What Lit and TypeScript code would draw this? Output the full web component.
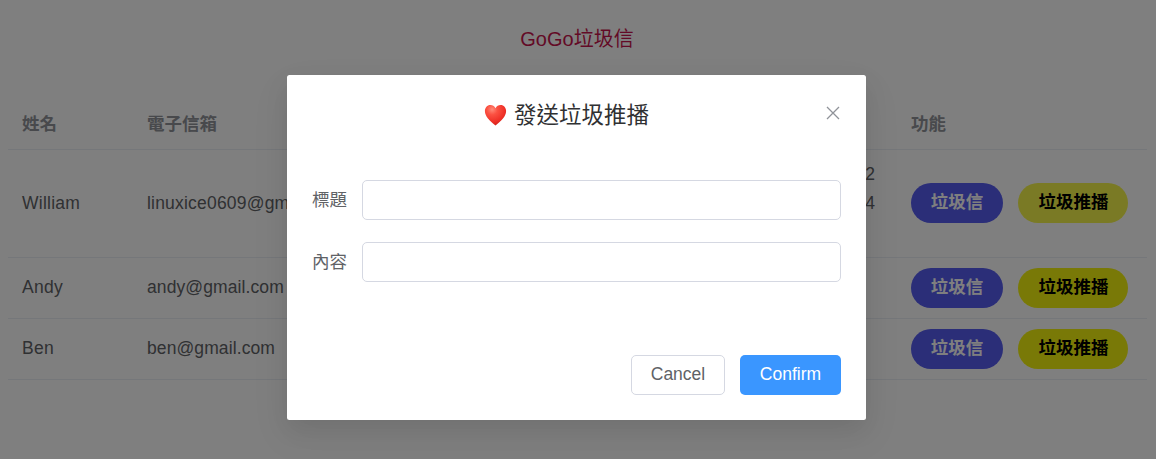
import { LitElement, html, css, svg } from "lit";
import { customElement } from "lit/decorators.js";

interface Member {
  name: string;
  email: string;
  token: string[];
  active?: boolean;
}

const MEMBERS: Member[] = [
  { name: "William", email: "linuxice0609@gmail.com", token: ["2", "4", ""], active: true },
  { name: "Andy", email: "andy@gmail.com", token: [] },
  { name: "Ben", email: "ben@gmail.com", token: [] },
];

const base = css`
  * {
    box-sizing: border-box;
  }
  button {
    font: inherit;
    height: 40px;
    padding: 0;
    display: inline-flex;
    align-items: center;
    justify-content: center;
    border: 1px solid transparent;
  }
`;

@customElement("member-table")
export class MemberTable extends LitElement {
  static styles = [
    base,
    css`
      :host {
        display: block;
        font-size: 17.5px;
        line-height: 28.75px;
        color: #606266;
      }
      .row {
        display: grid;
        grid-template-columns: 125px 220px 544px 1fr;
        align-items: center;
        border-bottom: 1px solid #ebeef5;
        padding: 10px 0 10px 14px;
        min-height: 61px;
        white-space: nowrap;
      }
      .tall {
        height: 108px;
        padding-bottom: 11px;
      }
      .head {
        height: 50px;
        min-height: 0;
        font-weight: 700;
        color: #909399;
      }
      .text {
        letter-spacing: 0.25px;
        padding-bottom: 1px;
      }
      .mail {
        letter-spacing: 0.1px;
        overflow: hidden;
      }
      .tall .mail {
        width: 145px;
        letter-spacing: 0.2px;
      }
      .tall .text {
        padding-bottom: 0;
      }
      .token {
        padding-right: 36px;
        text-align: right;
      }
      .line {
        height: 28.75px;
      }
      .actions {
        display: flex;
        gap: 15px;
      }
      .pill {
        border-radius: 20px;
        font-weight: 700;
      }
      .mailbtn {
        width: 92px;
        background: #565cf0;
        color: #fff;
        padding-bottom: 2px;
      }
      .push {
        width: 110px;
        background: #f3f30f;
        color: #000;
        padding: 0 0 2px 1px;
      }
      .push.on {
        background: #f5f54b;
      }
    `,
  ];

  render() {
    return html`
      <div class="row head">
        <div>姓名</div>
        <div>電子信箱</div>
        <div></div>
        <div>功能</div>
      </div>
      ${MEMBERS.map(
        (m) => html`
          <div class="row ${m.token.length ? "tall" : ""}">
            <div class="text">${m.name}</div>
            <div class="text mail">${m.email}</div>
            <div class="token">${m.token.map((t) => html`<div class="line">${t}</div>`)}</div>
            <div class="actions">
              <button class="pill mailbtn">垃圾信</button>
              <button class="pill push ${m.active ? "on" : ""}">垃圾推播</button>
            </div>
          </div>
        `
      )}
    `;
  }
}

@customElement("push-dialog")
export class PushDialog extends LitElement {
  static styles = [
    base,
    css`
      :host {
        box-sizing: border-box;
        display: flex;
        flex-direction: column;
        width: 579px;
        height: 345px;
        padding: 25px;
        background: #fff;
        border-radius: 2.5px;
        box-shadow: 0 15px 40px 5px rgba(0, 0, 0, 0.04), 0 10px 25px rgba(0, 0, 0, 0.08);
        font-size: 17.5px;
        color: #606266;
      }
      header {
        display: grid;
        grid-template-columns: 1fr 20px;
        align-items: center;
        height: 30px;
        color: #303133;
      }
      .title {
        display: flex;
        align-items: center;
        justify-content: center;
        gap: 7px;
        padding-top: 1px;
        font-size: 22.5px;
        line-height: 30px;
      }
      .heart {
        width: 23px;
        height: 23px;
        margin-bottom: 2px;
      }
      .close {
        width: 20px;
        height: 20px;
        margin: -6px 0 0 2px;
        color: #909399;
      }
      .form {
        display: grid;
        gap: 22px;
        margin-top: 50px;
      }
      .field {
        display: grid;
        grid-template-columns: 35px 1fr;
        gap: 15px;
        align-items: center;
      }
      label {
        line-height: 40px;
        height: 40px;
      }
      input {
        width: 100%;
        height: 40px;
        border: 1px solid #d5d8e2;
        border-radius: 5px;
        background: #fff;
        outline: none;
      }
      footer {
        display: flex;
        justify-content: flex-end;
        gap: 15px;
        margin-top: auto;
      }
      .btn {
        border-radius: 5px;
        padding-bottom: 2px;
      }
      .cancel {
        width: 94px;
        background: #fff;
        border-color: #d5d8e2;
        color: #606266;
      }
      .confirm {
        width: 101px;
        background: #3a96ff;
        color: #fff;
      }
    `,
  ];

  render() {
    return html`
      <header>
        <div class="title">
          ${svg`<svg class="heart" viewBox="0 0 23 23">
            <defs>
              <radialGradient id="g" cx="0.34" cy="0.22" r="0.85">
                <stop offset="0" stop-color="#ff8a78" />
                <stop offset="0.3" stop-color="#fb5142" />
                <stop offset="0.72" stop-color="#ee2f26" />
                <stop offset="1" stop-color="#c9201b" />
              </radialGradient>
            </defs>
            <path fill="url(#g)" d="M11.5 4.2C10.4 2.100 8.600 1 6.400 1 3.200 1 .9 3.600.9 7.100c0 5.200 4.700 9.900 10.600 14.300 5.900-4.400 10.600-9.100 10.600-14.300 0-3.500-2.300-6.100-5.500-6.100-2.200 0-4 1.100-5.100 3.200z" />
          </svg>`}
          <span>發送垃圾推播</span>
        </div>
        <svg class="close" viewBox="0 0 20 20" fill="none" stroke="currentColor" stroke-width="1.3">
          <path d="M4 4l12 12M16 4L4 16" />
        </svg>
      </header>
      <div class="form">
        <div class="field"><label>標題</label><input type="text" /></div>
        <div class="field"><label>內容</label><input type="text" /></div>
      </div>
      <footer>
        <button class="btn cancel">Cancel</button>
        <button class="btn confirm">Confirm</button>
      </footer>
    `;
  }
}

@customElement("app-root")
export class AppRoot extends LitElement {
  static styles = css`
    :host {
      display: block;
      height: 459px;
      overflow: hidden;
      position: relative;
      background: #fff;
      font-family: "Liberation Sans", "Noto Sans CJK TC", sans-serif;
    }
    .page {
      padding: 24px 9px 0 8px;
    }
    h1 {
      margin: 0 0 46px;
      padding-right: 1px;
      font-size: 20px;
      font-weight: 400;
      line-height: 30px;
      text-align: center;
      color: #c7144c;
    }
    .overlay {
      position: absolute;
      inset: 0;
      display: flex;
      justify-content: center;
      align-items: flex-start;
      padding: 75px 3px 0 0;
      background: rgba(0, 0, 0, 0.5);
    }
  `;

  render() {
    return html`
      <div class="page">
        <h1>GoGo垃圾信</h1>
        <member-table></member-table>
      </div>
      <div class="overlay"><push-dialog></push-dialog></div>
    `;
  }
}
